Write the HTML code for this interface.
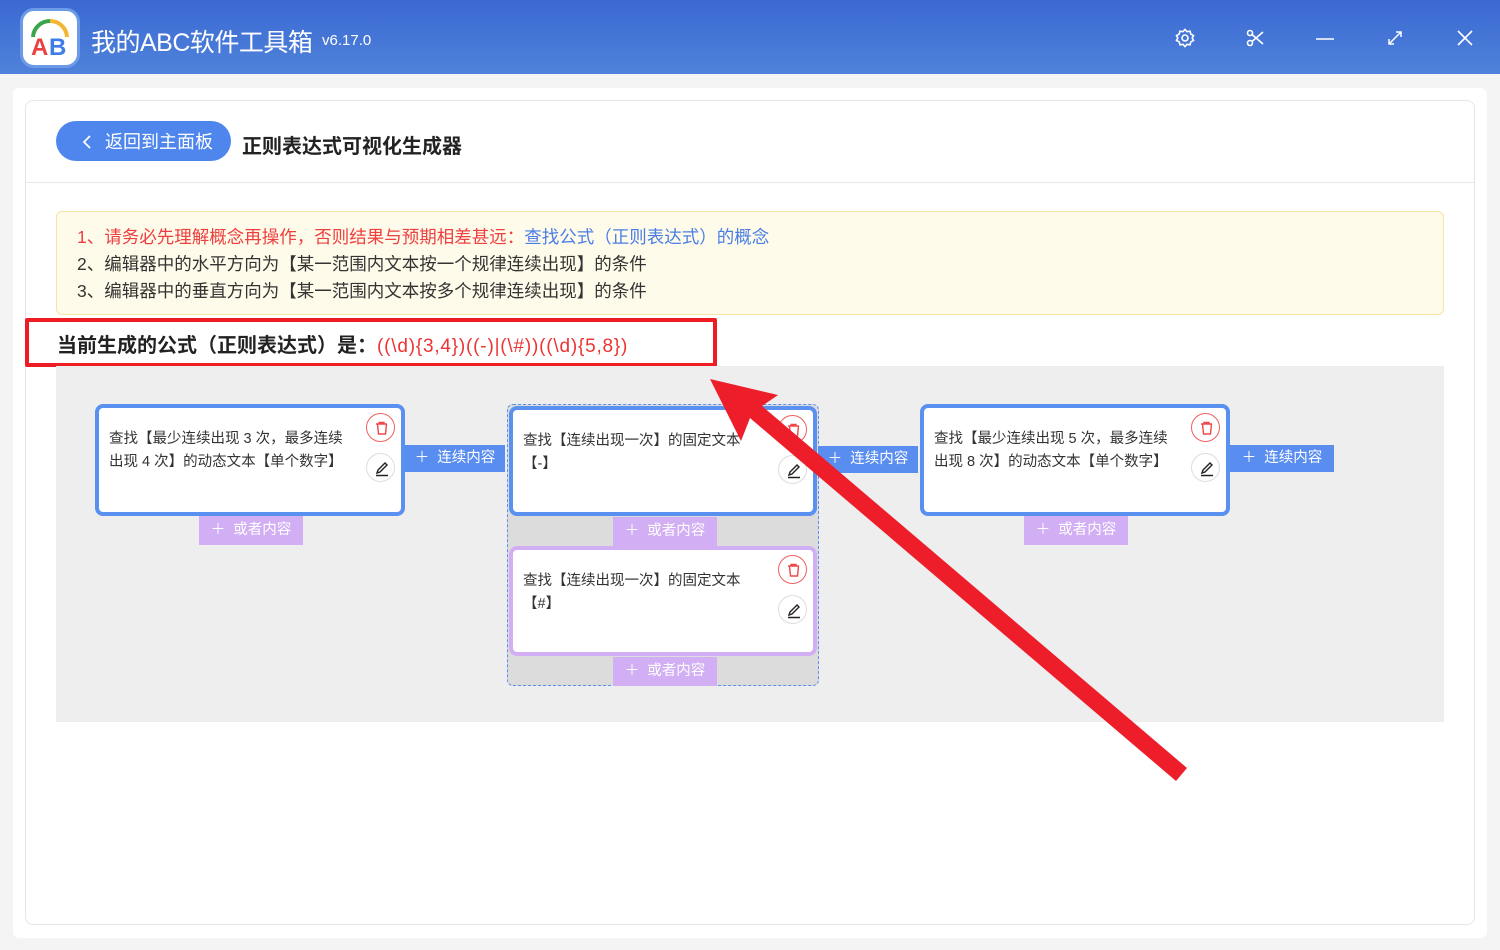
<!DOCTYPE html>
<html><head><meta charset="utf-8"><style>
*{box-sizing:border-box;margin:0;padding:0}
body{width:1500px;height:950px;overflow:hidden;background:#f4f4f4;font-family:"Liberation Sans","Noto Sans CJK SC",sans-serif;position:relative;color:#222}
.hd{position:absolute;left:0;top:0;width:1500px;height:74px;background:linear-gradient(180deg,#3a69d2,#4f82da)}
.logo{position:absolute;left:20px;top:8px;width:60px;height:60px;border-radius:14px;background:#fff;border:3px solid #6b9be6}
.ttl{position:absolute;left:91px;top:23px;color:#fff;font-size:25px;letter-spacing:-0.5px}
.ver{position:absolute;left:322px;top:32px;color:#fff;font-size:15px}
.ic{position:absolute;top:28px;color:#fff}
.card{position:absolute;left:25px;top:100px;width:1450px;height:825px;background:#fff;border:1px solid #e6e6e6;border-radius:8px}
.abs{position:absolute}
.back{left:56px;top:121px;width:175px;height:40px;border-radius:20px;background:#4e86ee;color:#fff;font-size:18px;line-height:42px;padding-left:49px}
.note{left:56px;top:211px;width:1388px;height:104px;background:#fffbea;border:1px solid #f6e3a7;border-radius:6px;font-size:17.5px;line-height:27px;padding:12px 0 0 20px;color:#333}
.canvas{left:56px;top:366px;width:1388px;height:356px;background:#eeeeee}
.node{position:absolute;background:#fff;border:4px solid #5a90f0;border-radius:8px;font-size:14.5px;line-height:23px;padding:20px 0 0 10px;color:#333}
.btn{position:absolute;color:#fff;font-size:14.5px;text-align:center}
.blue{background:#5a8df0;height:27px;line-height:27px;width:100px}
.pur{background:#d2aff4;height:29px;line-height:29px;width:104px}
.del{position:absolute;width:29px;height:29px;border-radius:50%;border:1px solid #f06060;background:#fff}
.ed{position:absolute;width:29px;height:29px;border-radius:50%;border:1px solid #ddd;background:#fff}
</style></head><body>
<div class="hd"></div>
<div class="logo"><svg width="54" height="54" viewBox="0 0 54 54"><path d="M10 26 A17 17 0 0 1 27 10" stroke="#3aa54a" stroke-width="4" fill="none"/><path d="M27 10 A17 17 0 0 1 44 26" stroke="#f2b632" stroke-width="4" fill="none"/><text x="8" y="44" font-size="24" font-family="Liberation Sans" fill="#e84242" font-weight="bold">A</text><text x="26" y="44" font-size="24" font-family="Liberation Sans" fill="#3f7de6" font-weight="bold">B</text></svg></div>
<div class="ttl">我的ABC软件工具箱</div><div class="ver">v6.17.0</div>
<svg class="ic" style="left:1175px" width="20" height="20" viewBox="0 0 20 20" fill="none" stroke="#fff" stroke-width="1.6"><circle cx="10" cy="10" r="3"/><path d="M10 1.5l2 2.2 3-.5.8 2.9 2.7 1.5-1.3 2.4 1.3 2.4-2.7 1.5-.8 2.9-3-.5-2 2.2-2-2.2-3 .5-.8-2.9L1.5 12.4 2.8 10 1.5 7.6l2.7-1.5.8-2.9 3 .5z"/></svg>
<svg class="ic" style="left:1245px" width="20" height="20" viewBox="0 0 20 20" fill="none" stroke="#fff" stroke-width="1.6"><circle cx="5" cy="5" r="2.5"/><circle cx="5" cy="15" r="2.5"/><path d="M7 6.5L18 16M7 13.5L18 4"/></svg>
<svg class="ic" style="left:1315px" width="20" height="20"><path d="M1 11H19" stroke="#fff" stroke-width="1.6"/></svg>
<svg class="ic" style="left:1385px" width="20" height="20" fill="none" stroke="#fff" stroke-width="1.5"><path d="M4 16L16 4M11 4h5v5M4 11v5h5"/></svg>
<svg class="ic" style="left:1455px" width="20" height="20" stroke="#fff" stroke-width="1.6"><path d="M3 3L17 17M17 3L3 17"/></svg>
<div class="abs" style="left:13px;top:88px;width:1474px;height:850px;background:#fff;border-radius:6px"></div>
<div class="card"></div>
<div class="abs" style="left:26px;top:182px;width:1448px;height:1px;background:#e8e8e8"></div>
<div class="abs back">返回到主面板</div>
<svg class="abs" style="left:80px;top:134px" width="14" height="16"><path d="M10 2L4 8l6 6" stroke="#fff" stroke-width="1.8" fill="none"/></svg>
<div class="abs" style="left:242px;top:130px;font-size:20px;font-weight:bold;color:#222">正则表达式可视化生成器</div>
<div class="abs note"><div><span style="color:#ee4040">1、请务必先理解概念再操作，否则结果与预期相差甚远：</span><span style="color:#4a7ee6">查找公式（正则表达式）的概念</span></div><div>2、编辑器中的水平方向为【某一范围内文本按一个规律连续出现】的条件</div><div>3、编辑器中的垂直方向为【某一范围内文本按多个规律连续出现】的条件</div></div>
<div class="abs" style="left:57px;top:329px;font-size:20px;font-weight:bold">当前生成的公式（正则表达式）是：<span style="color:#ee3333;font-weight:normal;font-size:19px;letter-spacing:0.8px">((\d){3,4})((-)|(\#))((\d){5,8})</span></div>
<div class="abs" style="left:25px;top:318px;width:692px;height:49px;border:4px solid #ee1d24;border-radius:2px"></div>
<div class="abs canvas"></div>
<div class="abs" style="left:507px;top:404px;width:312px;height:282px;background:#dcdcdc;border:1px dashed #5a90f0;border-radius:6px"></div>

<div class="node" style="left:95px;top:404px;width:310px;height:112px">查找【最少连续出现 3 次，最多连续<br>出现 4 次】的动态文本【单个数字】</div>
<div class="node" style="left:509px;top:406px;width:308px;height:110px">查找【连续出现一次】的固定文本<br>【-】</div>
<div class="node" style="left:509px;top:546px;width:308px;height:110px;border-color:#d2aff4">查找【连续出现一次】的固定文本<br>【#】</div>
<div class="node" style="left:920px;top:404px;width:310px;height:112px">查找【最少连续出现 5 次，最多连续<br>出现 8 次】的动态文本【单个数字】</div>

<div class="btn blue" style="left:405px;top:445px">＋&nbsp; 连续内容</div>
<div class="btn blue" style="left:818px;top:446px">＋&nbsp; 连续内容</div>
<div class="btn blue" style="left:1230px;top:445px;width:104px">＋&nbsp; 连续内容</div>
<div class="btn pur" style="left:199px;top:516px">＋&nbsp; 或者内容</div>
<div class="btn pur" style="left:613px;top:517px">＋&nbsp; 或者内容</div>
<div class="btn pur" style="left:613px;top:657px">＋&nbsp; 或者内容</div>
<div class="btn pur" style="left:1024px;top:516px">＋&nbsp; 或者内容</div>

<svg width="0" height="0" style="position:absolute"><defs><g id="tr"><path d="M9 10h11M12 10V8.5h5V10M10.5 10l1 10h7l1-10" stroke="#f04848" stroke-width="1.4" fill="none"/></g><g id="pe"><path d="M10 19l1-3 7-7 2 2-7 7z M9 21.5h12" stroke="#222" stroke-width="1.4" fill="none"/></g></defs></svg>
<div class="del" style="left:366px;top:413px"><svg width="29" height="29" viewBox="0 0 29 29"><use href="#tr"/></svg></div>
<div class="ed" style="left:366px;top:453px"><svg width="29" height="29"><use href="#pe"/></svg></div>
<div class="del" style="left:778px;top:415px"><svg width="29" height="29"><use href="#tr"/></svg></div>
<div class="ed" style="left:778px;top:455px"><svg width="29" height="29"><use href="#pe"/></svg></div>
<div class="del" style="left:778px;top:555px"><svg width="29" height="29"><use href="#tr"/></svg></div>
<div class="ed" style="left:778px;top:595px"><svg width="29" height="29"><use href="#pe"/></svg></div>
<div class="del" style="left:1191px;top:413px"><svg width="29" height="29"><use href="#tr"/></svg></div>
<div class="ed" style="left:1191px;top:453px"><svg width="29" height="29"><use href="#pe"/></svg></div>

<svg class="abs" style="left:0;top:0" width="1500" height="950"><polygon points="710,379 778,395 762,406 1187,768 1176,781 750,418 741,441" fill="#ee1d2a"/></svg>
</body></html>
